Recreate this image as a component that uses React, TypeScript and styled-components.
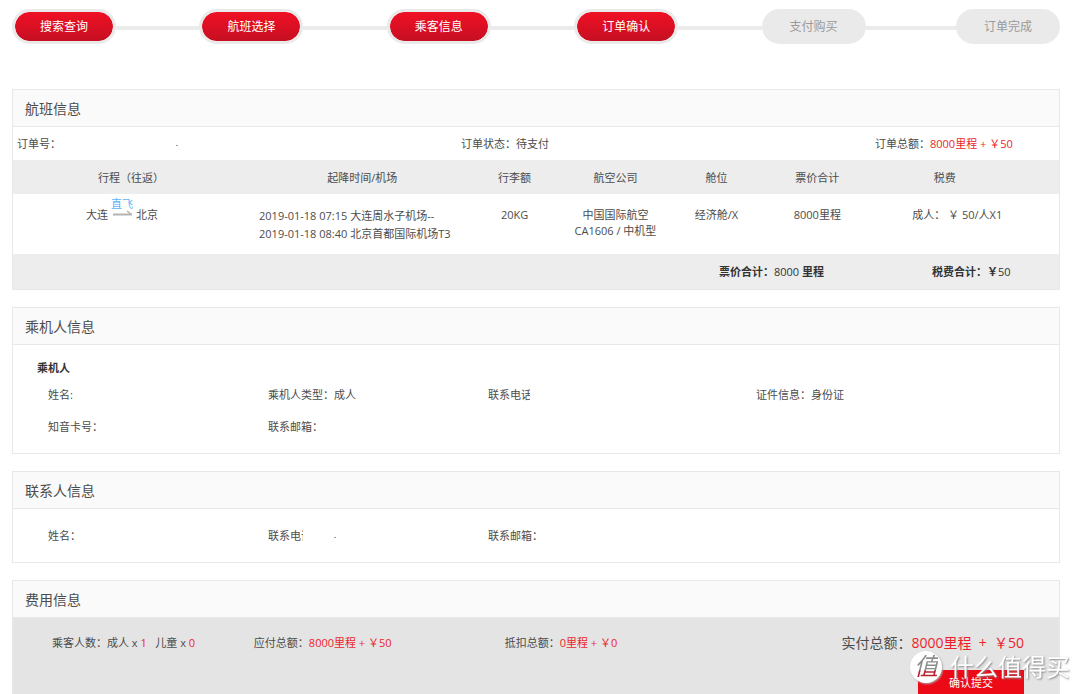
import React from "react";
import styled, { createGlobalStyle, css } from "styled-components";

const GlobalStyle = createGlobalStyle`
  * { box-sizing: border-box; }
  body {
    margin: 0;
    background: #fff;
    color: #4c4c4c;
    font: 11px/16px "Open Sans", "Noto Sans CJK SC", sans-serif;
  }
`;

const Page = styled.main`
  height: 100vh;
  padding: 9px 20px 0 12px;
  overflow: hidden;
`;

const Steps = styled.ol`
  display: flex;
  align-items: center;
  margin: 0 0 45px;
  padding: 0;
  list-style: none;
`;

const Step = styled.li<{ $done: boolean }>`
  flex: none;
  width: 104px;
  height: 35px;
  border: 3px solid #eaeaea;
  border-radius: 18px;
  background: #eaeaea;
  color: #999;
  font-size: 12px;
  line-height: 30px;
  text-align: center;
  ${(p) =>
    p.$done &&
    css`
      background: linear-gradient(#f01024, #c60f22) padding-box;
      color: #fff;
    `}
`;

const Connector = styled.li<{ $grow: number }>`
  flex: ${(p) => p.$grow} 1 0;
  height: 4px;
  margin-top: 3px;
  background: #ebebeb;
`;

const Panel = styled.section`
  margin-bottom: 17px;
  border: 1px solid #e8e8e8;
`;

const PanelTitle = styled.h2`
  margin: 0;
  padding: 2px 0 0 12px;
  border-bottom: 1px solid #e8e8e8;
  background: #fafafa;
  font-size: 14px;
  font-weight: 400;
  line-height: 34px;
`;

const OrderMeta = styled.div`
  display: grid;
  grid-template-columns: 444fr 414fr 184fr;
  padding-left: 4px;
  line-height: 33px;
`;

const Red = styled.span`
  color: #ec1f2b;
`;

const Speck = styled.i<{ $gap: number }>`
  display: inline-block;
  width: 2px;
  height: 1px;
  margin-left: ${(p) => p.$gap}px;
  background: #999;
  vertical-align: middle;
`;

const Clipped = styled.span<{ $width: number }>`
  display: inline-block;
  width: ${(p) => p.$width}px;
  overflow: hidden;
  white-space: nowrap;
  vertical-align: top;
`;

const FlightTable = styled.table`
  width: 100%;
  table-layout: fixed;
  border-collapse: collapse;
  text-align: center;
`;

const HeadCell = styled.th<{ $width: string; $left?: number; $right?: number }>`
  width: ${(p) => p.$width};
  height: 34px;
  padding: 2px ${(p) => p.$right ?? 0}px 0 ${(p) => p.$left ?? 0}px;
  background: #ededed;
  font-weight: 400;
`;

const Cell = styled.td<{ $top?: number; $right?: number }>`
  height: 60px;
  padding: ${(p) => p.$top ?? 13}px ${(p) => p.$right ?? 0}px 0 0;
  vertical-align: top;
  white-space: nowrap;
`;

const TimeCell = styled(Cell)`
  padding-left: 18px;
  line-height: 18px;
  text-align: left;
`;

const FootCell = styled.td<{ $right?: number }>`
  height: 35px;
  padding: 0 ${(p) => p.$right ?? 0}px 0 0;
  background: #ededed;
  font-weight: 700;
  color: #333;
`;

const Amount = styled.span`
  font-weight: 400;
`;

const Route = styled.div`
  display: flex;
  align-items: flex-end;
  justify-content: center;
  gap: 3px;
  padding-right: 10px;
`;

const Direct = styled.span`
  display: flex;
  flex-direction: column;
  padding-bottom: 7px;
  color: #5eb2f5;
  line-height: 12px;
`;

const PersonTitle = styled.h3`
  margin: 0;
  padding-left: 24px;
  color: #333;
  font-size: 11px;
  font-weight: 700;
  line-height: 23px;
`;

const PanelBody = styled.div`
  padding: 11px 0 10px;
`;

const InfoGrid = styled.div`
  display: grid;
  grid-template-columns: 220fr 220fr 268fr 303fr;
  padding-left: 35px;
  line-height: 32px;
`;

const Fees = styled.div`
  display: grid;
  grid-template-columns: 202fr 251fr 337fr 182fr;
  padding: 14px 35px 16px 39px;
  background: #e4e4e4;
  line-height: 22px;
  white-space: nowrap;
`;

const Payable = styled.div`
  justify-self: end;
  font-size: 14px;
`;

const Actions = styled.div`
  display: flex;
  justify-content: flex-end;
  padding-right: 35px;
  background: #e4e4e4;
`;

const SubmitButton = styled.button`
  width: 106px;
  height: 26px;
  padding: 0;
  border: 0;
  background: #ec0a17;
  color: #fff;
  font: inherit;
`;

const Watermark = styled.div`
  position: fixed;
  right: 10px;
  bottom: 10px;
  display: flex;
  align-items: center;
  gap: 8px;
  color: #fff;
  font-size: 24px;
  line-height: 34px;
  text-shadow: 1px 1px 2px #888;
  pointer-events: none;
`;

const Badge = styled.span`
  width: 32px;
  height: 32px;
  border-radius: 50%;
  background: #fff;
  box-shadow: 1px 1px 2px #aaa;
  line-height: 30px;
  text-align: center;
  text-shadow: none;
`;

const BadgeGlyph = styled.span`
  background: linear-gradient(#8c8c8c 62%, #b8202c 66%);
  background-clip: text;
  color: transparent;
  font-style: italic;
`;

const steps = [
  { label: "搜索查询", done: true, gap: 0 },
  { label: "航班选择", done: true, gap: 83 },
  { label: "乘客信息", done: true, gap: 83 },
  { label: "订单确认", done: true, gap: 83 },
  { label: "支付购买", done: false, gap: 83 },
  { label: "订单完成", done: false, gap: 90 },
];

export default function App() {
  return (
    <Page>
      <GlobalStyle />
      <Steps>
        {steps.map((s) => (
          <React.Fragment key={s.label}>
            {s.gap > 0 && <Connector $grow={s.gap} aria-hidden="true" />}
            <Step $done={s.done}>{s.label}</Step>
          </React.Fragment>
        ))}
      </Steps>

      <Panel>
        <PanelTitle>航班信息</PanelTitle>
        <OrderMeta>
          <div>
            订单号：
            <Speck $gap={115} />
          </div>
          <div>订单状态：待支付</div>
          <div>
            订单总额：<Red>8000里程 + ￥50</Red>
          </div>
        </OrderMeta>
        <FlightTable>
          <thead>
            <tr>
              <HeadCell $width="21.8%" $left={8}>
                行程（往返）
              </HeadCell>
              <HeadCell $width="23.2%">起降时间/机场</HeadCell>
              <HeadCell $width="5.9%">行李额</HeadCell>
              <HeadCell $width="13.4%">航空公司</HeadCell>
              <HeadCell $width="5.9%">舱位</HeadCell>
              <HeadCell $width="13.4%">票价合计</HeadCell>
              <HeadCell $width="16.4%" $right={57}>
                税费
              </HeadCell>
            </tr>
          </thead>
          <tbody>
            <tr>
              <Cell $top={4}>
                <Route>
                  <span>大连</span>
                  <Direct>
                    直飞
                    <svg width="22" height="6" viewBox="0 0 22 6" aria-hidden="true">
                      <path d="M2 4.5H21" fill="none" stroke="#b4b4b4" strokeWidth="2" />
                      <path d="M16 1L20.5 4.5" fill="none" stroke="#b4b4b4" strokeWidth="1.5" />
                    </svg>
                  </Direct>
                  <span>北京</span>
                </Route>
              </Cell>
              <TimeCell>
                2019-01-18 07:15 大连周水子机场--
                <br />
                2019-01-18 08:40 北京首都国际机场T3
              </TimeCell>
              <Cell>20KG</Cell>
              <Cell>
                中国国际航空
                <br />
                CA1606 / 中机型
              </Cell>
              <Cell>经济舱/X</Cell>
              <Cell>8000里程</Cell>
              <Cell $right={32}>成人： ￥ 50/人X1</Cell>
            </tr>
          </tbody>
          <tfoot>
            <tr>
              <FootCell colSpan={4} />
              <FootCell colSpan={2} $right={30}>
                票价合计：<Amount>8000</Amount> 里程
              </FootCell>
              <FootCell $right={4}>
                税费合计：￥<Amount>50</Amount>
              </FootCell>
            </tr>
          </tfoot>
        </FlightTable>
      </Panel>

      <Panel>
        <PanelTitle>乘机人信息</PanelTitle>
        <PanelBody>
          <PersonTitle>乘机人</PersonTitle>
          <InfoGrid>
            <div>姓名:</div>
            <div>乘机人类型：成人</div>
            <div>
              <Clipped $width={42}>联系电话</Clipped>
            </div>
            <div>证件信息：身份证</div>
            <div>知音卡号：</div>
            <div>联系邮箱：</div>
          </InfoGrid>
        </PanelBody>
      </Panel>

      <Panel>
        <PanelTitle>联系人信息</PanelTitle>
        <PanelBody>
          <InfoGrid>
            <div>姓名：</div>
            <div>
              <Clipped $width={35}>联系电话</Clipped>
              <Speck $gap={31} />
            </div>
            <div>联系邮箱：</div>
          </InfoGrid>
        </PanelBody>
      </Panel>

      <Panel>
        <PanelTitle>费用信息</PanelTitle>
        <Fees>
          <div>
            乘客人数：成人 x <Red>1</Red>&nbsp;&nbsp; 儿童 x <Red>0</Red>
          </div>
          <div>
            应付总额：<Red>8000里程 + ￥50</Red>
          </div>
          <div>
            抵扣总额：<Red>0里程 + ￥0</Red>
          </div>
          <Payable>
            实付总额：<Red>8000里程&nbsp; +&nbsp; ￥50</Red>
          </Payable>
        </Fees>
        <Actions>
          <SubmitButton type="button">确认提交</SubmitButton>
        </Actions>
      </Panel>

      <Watermark>
        <Badge>
          <BadgeGlyph>值</BadgeGlyph>
        </Badge>
        什么值得买
      </Watermark>
    </Page>
  );
}
